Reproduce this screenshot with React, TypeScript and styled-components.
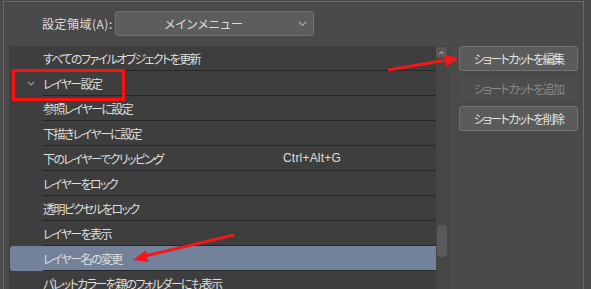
import React from "react";
import styled, { createGlobalStyle } from "styled-components";

const GlobalStyle = createGlobalStyle`
  html, body {
    margin: 0;
    background: #4a4a4a;
  }
  body {
    font-family: "Noto Sans CJK JP", "Liberation Sans", sans-serif;
    font-size: 12px;
    color: #dedede;
    font-feature-settings: "palt";
    overflow: hidden;
  }
`;

const Page = styled.div`
  position: relative;
  width: 591px;
  height: 289px;
  overflow: hidden;
`;

const Frame = styled.div`
  margin: 1px 0 0 3px;
  width: 581px;
  height: 288px;
  box-sizing: border-box;
  border: 1px solid #6a6a6a;
  border-bottom: none;
  display: flex;
  flex-direction: column;
`;

const Header = styled.div`
  height: 44px;
  display: flex;
  align-items: flex-start;
  padding: 9px 0 0 38px;
  box-sizing: border-box;
  gap: 3px;
`;

const Label = styled.div`
  width: 70px;
  height: 25px;
  line-height: 25px;
  text-align: right;
  white-space: nowrap;
  letter-spacing: 0.5px;
`;

const Select = styled.div`
  width: 199px;
  height: 25px;
  box-sizing: border-box;
  background: #5d5d5d;
  border: 1px solid #707070;
  border-radius: 3px;
  display: flex;
  align-items: center;
  padding: 0 6px 0 0;
`;

const SelectText = styled.div`
  flex: 1;
  text-align: center;
  letter-spacing: 0.6px;
  padding-right: 6px;
`;

const Body = styled.div`
  flex: 1;
  display: flex;
  padding-left: 5px;
  gap: 9px;
  min-height: 0;
`;

const List = styled.div`
  width: 441px;
  background: #3e3e3e;
  display: flex;
`;

const Rows = styled.div`
  flex: 1;
  padding-left: 1px;
  display: flex;
  flex-direction: column;
`;

const Row = styled.div<{ $selected?: boolean }>`
  height: 25px;
  display: flex;
  flex-shrink: 0;
  background: ${(p) => (p.$selected ? "#73829b" : "transparent")};
  border-radius: ${(p) => (p.$selected ? "3px 0 0 3px" : "0")};
`;

const Gutter = styled.div`
  width: 33px;
  display: flex;
  align-items: center;
  justify-content: flex-end;
  padding-right: 8px;
  box-sizing: border-box;
`;

const Cell = styled.div`
  flex: 1;
  display: grid;
  grid-template-columns: 240px 1fr;
  align-items: center;
  border-bottom: 1px solid #262626;
  white-space: nowrap;
`;

const ItemText = styled.span`
  letter-spacing: -1.6px;
`;

const Shortcut = styled.span`
  font-family: "Liberation Sans", "DejaVu Sans", sans-serif;
  font-size: 12px;
  letter-spacing: 0.2px;
`;

const Scrollbar = styled.div`
  width: 14px;
  background: #464646;
  display: flex;
  flex-direction: column;
  align-items: flex-start;
`;

const ScrollUp = styled.div`
  width: 11px;
  height: 11px;
  margin-top: 1px;
  background: #585858;
  border-radius: 2px;
  display: flex;
  align-items: center;
  justify-content: center;
`;

const Thumb = styled.div`
  width: 10px;
  height: 32px;
  margin: 167px 0 0 1px;
  background: #5a5a5a;
  border-radius: 4px;
`;

const Buttons = styled.div`
  width: 119px;
  display: flex;
  flex-direction: column;
  gap: 5px;
`;

const Button = styled.div<{ $disabled?: boolean }>`
  height: 25px;
  box-sizing: border-box;
  border-radius: 3px;
  border: 1px solid ${(p) => (p.$disabled ? "#4c4c4c" : "#727272")};
  background: ${(p) => (p.$disabled ? "#4d4d4d" : "#5b5b5b")};
  color: ${(p) => (p.$disabled ? "#8a8a8a" : "#e2e2e2")};
  display: flex;
  align-items: center;
  justify-content: center;
  white-space: nowrap;
  letter-spacing: -1.6px;
`;

const Overlay = styled.svg`
  position: absolute;
  left: 0;
  top: 0;
  pointer-events: none;
`;

const Chevron = ({ color = "#9a9a9a", size = 8 }: { color?: string; size?: number }) => (
  <svg width={size} height={size * 0.6} viewBox="0 0 10 6">
    <path d="M1 1 L5 5 L9 1" fill="none" stroke={color} strokeWidth="1.4" />
  </svg>
);

const items: { label: string; shortcut?: string; folder?: boolean; selected?: boolean }[] = [
  { label: "すべてのファイルオブジェクトを更新" },
  { label: "レイヤー設定", folder: true },
  { label: "参照レイヤーに設定" },
  { label: "下描きレイヤーに設定" },
  { label: "下のレイヤーでクリッピング", shortcut: "Ctrl+Alt+G" },
  { label: "レイヤーをロック" },
  { label: "透明ピクセルをロック" },
  { label: "レイヤーを表示" },
  { label: "レイヤー名の変更", selected: true },
  { label: "パレットカラーを親のフォルダーにも表示" },
];

export default function App() {
  return (
    <Page>
      <GlobalStyle />
      <Frame>
        <Header>
          <Label>設定領域(A):</Label>
          <Select>
            <SelectText>メインメニュー</SelectText>
            <Chevron color="#a8a8a8" size={9} />
          </Select>
        </Header>
        <Body>
          <List>
            <Rows>
              {items.map((it) => (
                <Row key={it.label} $selected={it.selected}>
                  <Gutter>{it.folder && <Chevron />}</Gutter>
                  <Cell>
                    <ItemText>{it.label}</ItemText>
                    {it.shortcut && <Shortcut>{it.shortcut}</Shortcut>}
                  </Cell>
                </Row>
              ))}
            </Rows>
            <Scrollbar>
              <ScrollUp>
                <svg width="7" height="4" viewBox="0 0 8 5">
                  <path d="M1 4 L4 1 L7 4" fill="none" stroke="#a0a0a0" strokeWidth="1.3" />
                </svg>
              </ScrollUp>
              <Thumb />
            </Scrollbar>
          </List>
          <Buttons>
            <Button>ショートカットを編集</Button>
            <Button $disabled>ショートカットを追加</Button>
            <Button>ショートカットを削除</Button>
          </Buttons>
        </Body>
      </Frame>
      <Overlay width="591" height="289" viewBox="0 0 591 289">
        <rect x="13.5" y="70.5" width="110" height="29" fill="none" stroke="#ff1010" strokeWidth="3" />
        <line x1="388" y1="70" x2="447" y2="60" stroke="#f01818" strokeWidth="3" />
        <polygon points="459,58 444,55 446,67" fill="#f01818" />
        <line x1="234" y1="235" x2="145" y2="256" stroke="#f01818" strokeWidth="3" />
        <polygon points="133,260 146,250 148,262" fill="#f01818" />
      </Overlay>
    </Page>
  );
}
